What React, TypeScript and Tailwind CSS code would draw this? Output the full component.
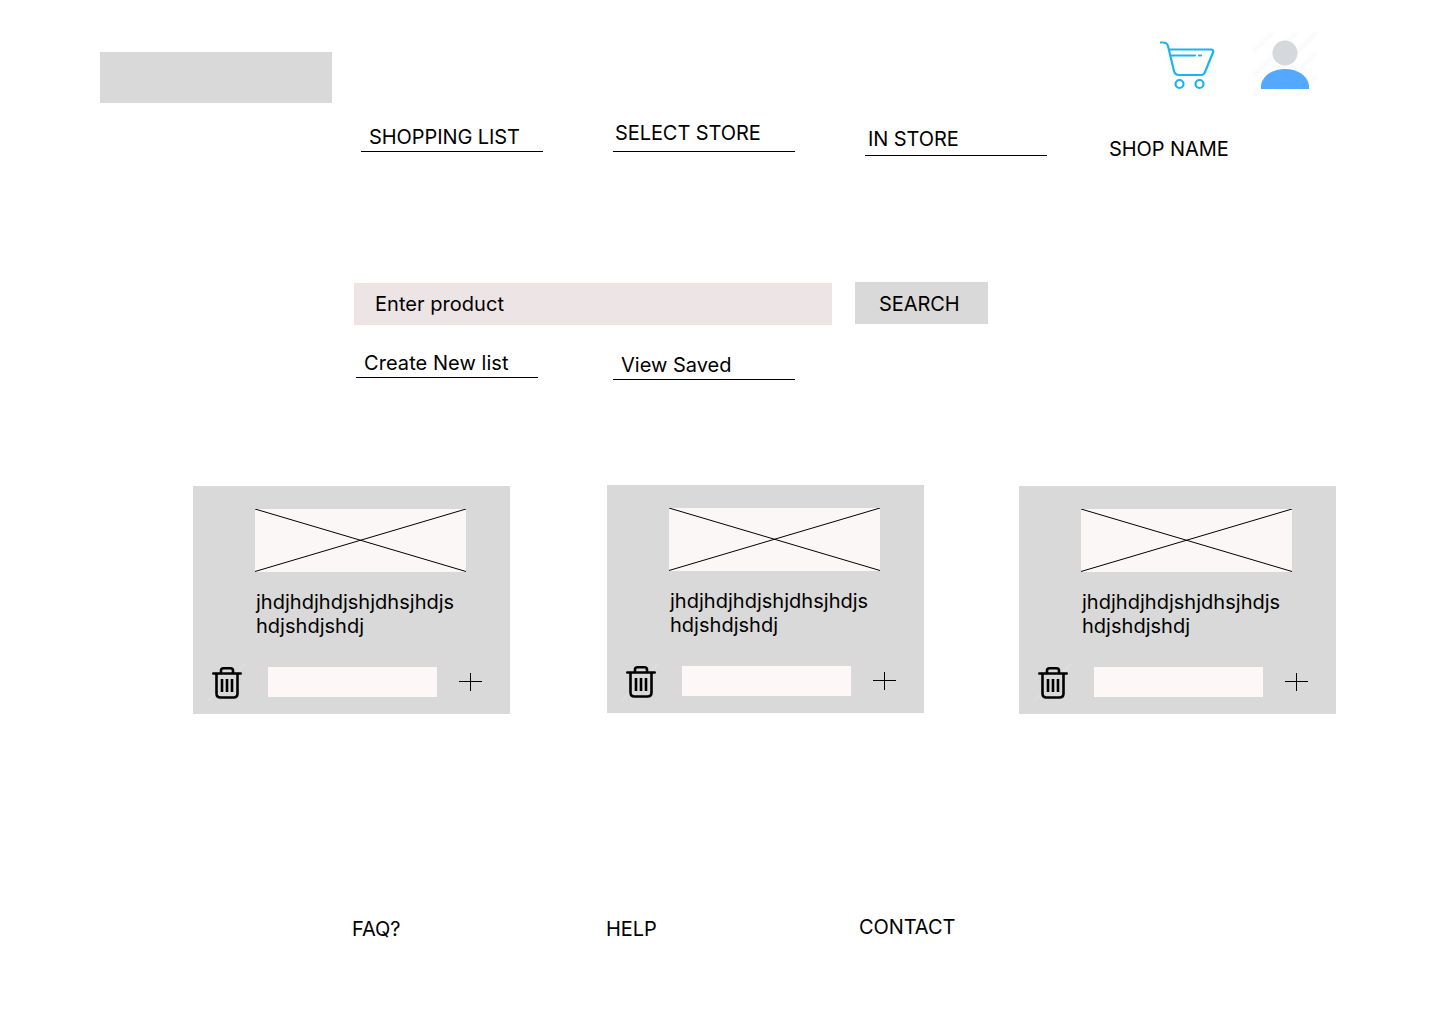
function Cart() {
  return (
    <svg width="56" height="50" viewBox="0 0 56 50" fill="none" stroke="#19b5f1" strokeWidth="2.200" strokeLinecap="round" strokeLinejoin="round">
      <path d="M0.5 1.5H3Q7 1.5 8 5L14 30Q15 34 19 34H41Q44 34 45 31L53 11.500Q54 8.500 51 8.500H9.500" />
      <path d="M11 14.500H35M39 14.500H41" />
      <circle cx="19.500" cy="43" r="4" />
      <circle cx="39.500" cy="43" r="4" />
    </svg>
  );
}

function Avatar() {
  return (
    <svg width="64" height="64" viewBox="0 0 64 64" fill="none">
      <path d="M0 20L20 0M0 44L44 0M0 64L64 0M20 64L64 20M44 64L64 44" stroke="#fbfbfb" strokeWidth="5" />
      <circle cx="32" cy="21" r="12.500" fill="#d5d8dc" />
      <path d="M8 57V53C10 43 20 37 32 37C44 37 54 43 56 53V57Z" fill="#54a8ff" />
    </svg>
  );
}

function Trash() {
  return (
    <svg width="30" height="32" viewBox="0 0 30 32" fill="none" stroke="#000" strokeWidth="2.600" strokeLinecap="round" strokeLinejoin="round" className="overflow-visible">
      <path d="M-4 34L4 26M24 6L32 -2" stroke="#dedede" strokeWidth="2" />
      <path d="M1.300 6.500H28.700" />
      <path d="M9 6V3.500Q9 1.300 11.500 1.300H18.500Q21 1.300 21 3.500V6" />
      <path d="M4.500 7V26.500Q4.500 30.500 8.500 30.500H21.500Q25.500 30.500 25.500 26.500V7" />
      <path d="M10 12V25M15 12V25M20 12V25" strokeLinecap="butt" />
    </svg>
  );
}

function Plus() {
  return (
    <svg width="23" height="20" viewBox="0 0 23 20" fill="none" stroke="#000" strokeWidth="1">
      <path d="M0 9.500H23M11.500 1V19" />
    </svg>
  );
}

function Card({ first, second, className }: { first: string; second: string; className: string }) {
  return (
    <div className={`w-[317px] h-[228px] bg-[#d9d9d9] flex flex-col ${className}`}>
      <div className="ml-[62px] mt-[23px] w-[211px] h-[63px] bg-[#faf7f6]">
        <svg width="211" height="63" viewBox="0 0 211 63" fill="none" stroke="#000" strokeWidth="1">
          <path d="M0 0L211 62.500M0 62.500L211 0" />
        </svg>
      </div>
      <p className="ml-[63px] mt-[18px] text-[20px] leading-[24px] tracking-[0.02px]">
        {first}
        <br />
        {second}
      </p>
      <div className="ml-[19px] mt-[29px] flex items-start">
        <Trash />
        <div className="ml-[26px] w-[169px] h-[30px] bg-[#fdf7f7]" />
        <div className="ml-[22px] mt-[5px]">
          <Plus />
        </div>
      </div>
    </div>
  );
}

function Underlined({ label, className, pad }: { label: string; className: string; pad: string }) {
  return (
    <div className={`w-[182px] border-b border-black text-[20px] leading-[24px] ${pad} ${className}`}>{label}</div>
  );
}

export default function App() {
  return (
    <div className="w-[1440px] h-[1024px] bg-white text-black font-['Inter','Liberation_Sans',sans-serif] flex flex-col overflow-hidden">
      <header className="h-[120px] flex items-start">
        <div className="ml-[100px] mt-[52px] w-[232px] h-[51px] bg-[#d9d9d9]" />
        <div className="ml-[828px] mt-[41px]">
          <Cart />
        </div>
        <div className="ml-[37px] mt-[32px]">
          <Avatar />
        </div>
      </header>

      <nav className="h-[162px] flex items-start">
        <Underlined label="SHOPPING LIST" className="ml-[361px] mt-[5px] tracking-[-0.08px]" pad="pl-[8px] pb-[2px]" />
        <Underlined label="SELECT STORE" className="ml-[70px] mt-[1px] tracking-[-0.08px]" pad="pl-[2px] pb-[6px]" />
        <Underlined label="IN STORE" className="ml-[70px] mt-[7px] tracking-[-0.08px]" pad="pl-[3px] pb-[4px]" />
        <div className="ml-[62px] mt-[17px] text-[20px] leading-[24px] tracking-[-0.08px]">SHOP NAME</div>
      </nav>

      <div className="h-[69px] flex items-start">
        <div className="ml-[354px] mt-[1px] w-[478px] h-[42px] pl-[21px] bg-[#ede4e5] text-[20px] leading-[42px] tracking-[0.04px]">Enter product</div>
        <div className="ml-[23px] w-[133px] h-[42px] pl-[24px] bg-[#d9d9d9] text-[20px] leading-[44px] tracking-[-0.08px]">SEARCH</div>
      </div>

      <div className="h-[135px] flex items-start">
        <Underlined label="Create New list" className="ml-[356px] tracking-[0.06px]" pad="pl-[8px] pb-[2px]" />
        <Underlined label="View Saved" className="ml-[75px] mt-[2px]" pad="pl-[8px] pb-[2px]" />
      </div>

      <main className="h-[431px] flex items-start">
        <Card first="jhdjhdjhdjshjdhsjhdjs" second="hdjshdjshdj" className="ml-[193px]" />
        <Card first="jhdjhdjhdjshjdhsjhdjs" second="hdjshdjshdj" className="ml-[97px] -mt-px" />
        <Card first="jhdjhdjhdjshjdhsjhdjs" second="hdjshdjshdj" className="ml-[95px]" />
      </main>

      <footer className="flex items-start text-[20px] leading-[24px] tracking-[-0.08px]">
        <div className="ml-[352px] w-[254px]">FAQ?</div>
        <div className="w-[253px]">HELP</div>
        <div className="-mt-[2px]">CONTACT</div>
      </footer>
    </div>
  );
}
